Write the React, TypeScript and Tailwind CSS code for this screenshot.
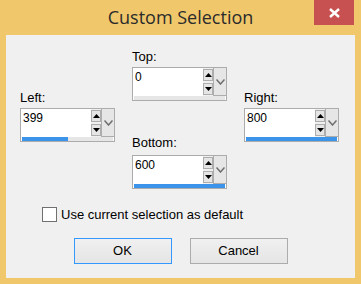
import React from "react";

const FONT = { fontFamily: '"Liberation Sans", Arial, sans-serif' };

interface SpinProps {
  value: string;
  fill: number;
}

function UpDown() {
  return (
    <div className="flex w-[10px] flex-col justify-between bg-[#f0f0f0] py-[1px]">
      <div className="flex h-[12px] items-center justify-center border border-[#adadad] bg-[#e5e5e5]">
        <svg width="7" height="4" viewBox="0 0 7 4">
          <path d="M0 4 L3.5 0 L7 4 Z" fill="#000" />
        </svg>
      </div>
      <div className="flex h-[12px] items-center justify-center border border-[#adadad] bg-[#e5e5e5]">
        <svg width="7" height="4" viewBox="0 0 7 4">
          <path d="M0 0 L3.5 4 L7 0 Z" fill="#000" />
        </svg>
      </div>
    </div>
  );
}

function Spinner({ value, fill }: SpinProps) {
  return (
    <div className="flex h-[34px] w-[95px] flex-col border border-[#acacac] bg-white">
      <div className="flex h-[28px]">
        <div className="flex-1 pl-[2px] pt-[2px] text-[12px] leading-[14px] text-black">{value}</div>
        <UpDown />
        <div className="flex w-[13px] items-center justify-center border-b border-l border-[#adadad] bg-[#e6e6e6]">
          <svg width="9" height="6" viewBox="0 0 9 6">
            <path d="M0.5 0.5 L4.5 5 L8.5 0.5" fill="none" stroke="#6d6d6d" strokeWidth="1.5" />
          </svg>
        </div>
      </div>
      <div className="mx-[1px] h-[4px] bg-[#e6e6e6]">
        <div className="h-full bg-[#3c94ea]" style={{ width: `${fill}%` }} />
      </div>
    </div>
  );
}

function Field({ label, value, fill }: { label: string; value: string; fill: number }) {
  return (
    <div className="flex flex-col">
      <div className="text-[13px] leading-[14px] text-black">{label}</div>
      <div className="mt-[3px]">
        <Spinner value={value} fill={fill} />
      </div>
    </div>
  );
}

export default function App() {
  return (
    <div className="flex h-[284px] w-[361px] flex-col bg-[#f0c86b]" style={FONT}>
      <div className="relative flex h-[35px] items-center justify-center">
        <span className="text-[18px] text-[#2b2b2b]" style={{ fontFamily: '"Open Sans", "Noto Sans", sans-serif' }}>
          Custom Selection
        </span>
        <div className="absolute right-[7px] top-0 flex h-[25px] w-[40px] items-center justify-center bg-[#c75050]">
          <svg width="11" height="10" viewBox="0 0 11 10">
            <path d="M1 1 L10 9 M10 1 L1 9" stroke="#fff" strokeWidth="2.4" />
          </svg>
        </div>
      </div>
      <div className="mx-[6px] mb-[6px] flex flex-1 flex-col bg-[#f0f0f0]">
        <div className="flex gap-[17px] pl-[14px]">
          <div className="mt-[56px]">
            <Field label="Left:" value="399" fill={50} />
          </div>
          <div className="mt-[15px] flex flex-col">
            <Field label="Top:" value="0" fill={0} />
            <div className="mt-[35px]">
              <div className="text-[13px] leading-[14px] text-black">Bottom:</div>
              <div className="mt-[5px]">
                <Spinner value="600" fill={100} />
              </div>
            </div>
          </div>
          <div className="mt-[56px]">
            <Field label="Right:" value="800" fill={100} />
          </div>
        </div>
        <div className="mt-[18px] flex items-center gap-[4px] pl-[36px]">
          <div className="h-[15px] w-[15px] border border-[#707070] bg-white" />
          <span className="text-[13px] leading-[14px] text-black">Use current selection as default</span>
        </div>
        <div className="mt-[16px] flex justify-center gap-[18px]">
          <button className="h-[26px] w-[98px] border border-[#3399ff] bg-gradient-to-b from-[#f0f0f0] to-[#e5e5e5] text-[13px] text-black">
            OK
          </button>
          <button className="h-[26px] w-[98px] border border-[#acacac] bg-gradient-to-b from-[#f0f0f0] to-[#e5e5e5] text-[13px] text-black">
            Cancel
          </button>
        </div>
      </div>
    </div>
  );
}
